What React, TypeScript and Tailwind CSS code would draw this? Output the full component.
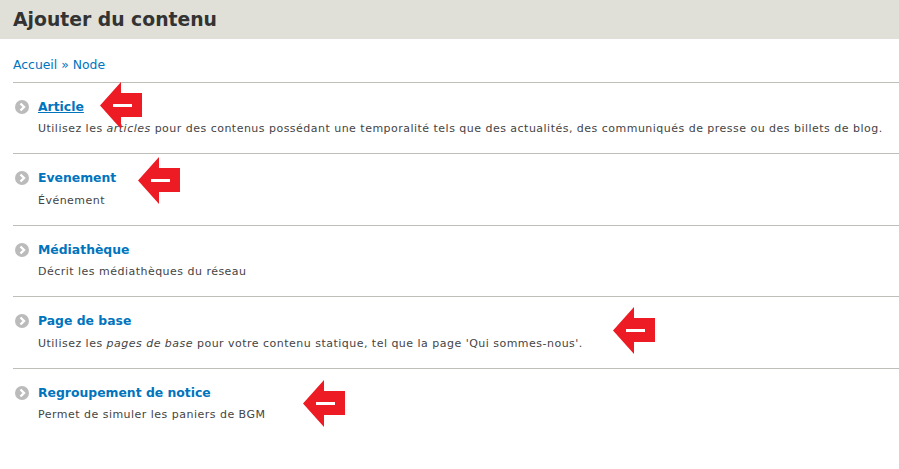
const items = [
  {
    title: "Article",
    underline: true,
    desc: (
      <>
        Utilisez les <em>articles</em> pour des contenus possédant une temporalité tels que des actualités, des communiqués de presse ou des billets de blog.
      </>
    ),
    arrow: "left-[87px] top-[-1px]",
  },
  { title: "Evenement", desc: <>Événement</>, arrow: "left-[125px] top-[3px]" },
  { title: "Médiathèque", desc: <>Décrit les médiathèques du réseau</> },
  {
    title: "Page de base",
    desc: (
      <>
        Utilisez les <em>pages de base</em> pour votre contenu statique, tel que la page 'Qui sommes-nous'.
      </>
    ),
    arrow: "left-[600px] top-[10px]",
  },
  { title: "Regroupement de notice", desc: <>Permet de simuler les paniers de BGM</>, arrow: "left-[290px] top-[11px]" },
];

const Arrow = ({ className }: { className: string }) => (
  <svg className={`absolute ${className}`} width="43" height="47" viewBox="0 0 43 47">
    <polygon points="0,23.5 21,0 21,11 42,11 42,35 21,35 21,47" fill="#ed1c24" />
    <rect x="13" y="22" width="19" height="3" fill="#fff" />
  </svg>
);

const Bullet = () => (
  <svg className="shrink-0" width="14" height="14" viewBox="0 0 14 14">
    <circle cx="7" cy="7" r="7" fill="#bbbbbb" />
    <path d="M5.5 3.5 L9 7 L5.5 10.5" fill="none" stroke="#fff" strokeWidth="2.4" />
  </svg>
);

export default function App() {
  return (
    <div className="min-h-[469px] bg-white font-['DejaVu_Sans',sans-serif] text-[#333]">
      <div className="h-[39px] bg-[#e0e0d8] pl-[13px]">
        <h1 className="text-[18.8px] font-bold leading-[39px] text-[#333]">Ajouter du contenu</h1>
      </div>
      <div className="pl-[13px]">
        <div className="h-[42.9px] pt-[17px] text-[12.4px] leading-[18px] text-[#0074bd]">Accueil » Node</div>
        {items.map((item) => (
          <div key={item.title} className="relative h-[71.5px] border-t border-[#bebfb9]">
            <div className="flex items-center gap-[9px] pl-[2px] pt-[15px]">
              <Bullet />
              <span className={`text-[12.4px] font-bold leading-[18px] text-[#0074bd] ${item.underline ? "underline" : ""}`}>
                {item.title}
              </span>
            </div>
            <p className="pl-[25px] pt-[5.6px] text-[11px] leading-[16px] tracking-[0.48px] text-[#444]">{item.desc}</p>
            {item.arrow && <Arrow className={item.arrow} />}
          </div>
        ))}
      </div>
    </div>
  );
}
